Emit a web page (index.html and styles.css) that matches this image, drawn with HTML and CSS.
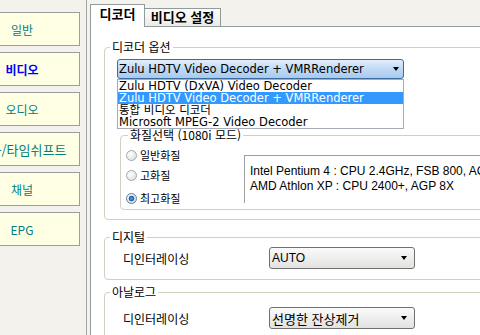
FILE: index.html
```html
<!DOCTYPE html>
<html lang="ko">
<head>
    <meta charset="UTF-8">
    <title>비디오 설정</title>
    <link rel="stylesheet" href="styles.css">
</head>
<body>

    <div class="window">
        <!-- left menu -->
        <div class="sidebar">
            <div class="nav">
                <div class="nav-item">일반</div>
                <div class="nav-item active">비디오</div>
                <div class="nav-item">오디오</div>
                <div class="nav-item wide">녹화/타임쉬프트</div>
                <div class="nav-item">채널</div>
                <div class="nav-item">EPG</div>
            </div>
        </div>

        <div class="tabctl">
            <div class="tabs">
                <div class="tab active">디코더</div>
                <div class="tab">비디오 설정</div>
            </div>

            <div class="pane">
                <fieldset class="group group-decoder">
                    <legend>디코더 옵션</legend>

                    <div class="combo-wrap">
                        <div class="combo combo-blue">
                            <span>Zulu HDTV Video Decoder + VMRRenderer</span>
                            <span class="arrow"></span>
                        </div>
                        <ul class="droplist">
                            <li>Zulu HDTV (DxVA) Video Decoder</li>
                            <li class="selected">Zulu HDTV Video Decoder + VMRRenderer</li>
                            <li>통합 비디오 디코더</li>
                            <li>Microsoft MPEG-2 Video Decoder</li>
                        </ul>
                    </div>

                    <fieldset class="group group-quality">
                        <legend>화질선택 (1080i 모드)</legend>
                        <div class="quality-body">
                            <div class="radios">
                                <div class="radio-row"><span class="radio"></span>일반화질</div>
                                <div class="radio-row"><span class="radio"></span>고화질</div>
                                <div class="radio-row"><span class="radio checked"></span>최고화질</div>
                            </div>
                            <div class="info-box">
                                Intel Pentium 4 : CPU 2.4GHz, FSB 800, AGP 4X<br>
                                AMD Athlon XP : CPU 2400+, AGP 8X
                            </div>
                        </div>
                    </fieldset>
                </fieldset>

                <fieldset class="group group-digital">
                    <legend>디지털</legend>
                    <div class="row">
                        <div class="row-label">디인터레이싱</div>
                        <div class="combo combo-gray">
                            <span class="latin">AUTO</span>
                            <span class="arrow"></span>
                        </div>
                    </div>
                </fieldset>

                <fieldset class="group group-analog">
                    <legend>아날로그</legend>
                    <div class="row">
                        <div class="row-label">디인터레이싱</div>
                        <div class="combo combo-gray">
                            <span class="ko">선명한 잔상제거</span>
                            <span class="arrow"></span>
                        </div>
                    </div>
                </fieldset>
            </div>
        </div>
    </div>

</body>
</html>
```

FILE: styles.css
```css
body {
    margin: 0;
    background: #f3f2ec;
    font-family: "DejaVu Sans", "Noto Sans CJK KR", sans-serif;
    font-size: 12px;
    color: #000;
    overflow: hidden;
}
.window {
    display: flex;
    width: 560px;
    height: 335px;
}

/* left menu */
.sidebar {
    width: 86px;
    border-right: 1px solid #a7a7a2;
    padding-top: 12px;
    overflow: hidden;
}
.nav {
    margin-left: -36px;
    width: 116px;
    display: flex;
    flex-direction: column;
    gap: 6px;
}
.nav-item {
    height: 34px;
    box-sizing: border-box;
    border: 1px solid #9d9d9d;
    background: #ffffe4;
    color: #008080;
    display: flex;
    align-items: center;
    justify-content: center;
    font-family: "Noto Sans CJK KR", sans-serif;
    font-size: 12px;
    white-space: nowrap;
}
.nav-item.wide {
    font-size: 13px;
}
.nav-item.active {
    color: #0000ff;
    font-weight: bold;
}

/* tab control */
.tabctl {
    margin-left: 3px;
    width: 450px;
    display: flex;
    flex-direction: column;
}
.tabs {
    flex-shrink: 0;
    display: flex;
    align-items: flex-end;
    height: 27px;
    margin-bottom: -1px;
}
.tab {
    box-sizing: border-box;
    border: 1px solid #919b9c;
    border-bottom: none;
    font-family: "Noto Sans CJK KR", sans-serif;
    font-weight: bold;
    font-size: 13px;
    line-height: 16px;
    text-align: center;
    white-space: nowrap;
    width: 77px;
    height: 18px;
    margin-left: -1px;
    margin-bottom: 1px;
    background: linear-gradient(#fcfcfb, #ecebe6);
}
.tab.active {
    width: 55px;
    height: 23px;
    margin-left: 0;
    margin-bottom: 0;
    padding-top: 1px;
    background: #fff;
    position: relative;
    z-index: 1;
}
.pane {
    flex: 1;
    min-height: 0;
    overflow: hidden;
    background: #fff;
    border-top: 1px solid #919b9c;
    border-left: 1px solid #919b9c;
    padding: 13px 13px 0;
}

/* group boxes */
.group {
    margin: 0;
    padding: 0;
    min-width: 0;
    border: 1px solid #d0d0bf;
    border-radius: 4px;
}
.group legend {
    padding: 0 2px;
    margin-left: 5px;
    font-family: "Noto Sans CJK KR", sans-serif;
    font-size: 12px;
    line-height: 14px;
}

/* combo boxes */
.combo {
    box-sizing: border-box;
    display: flex;
    align-items: center;
    border-radius: 3px;
    white-space: nowrap;
}
.arrow {
    margin-left: auto;
    width: 0;
    height: 0;
    border-left: 3.5px solid transparent;
    border-right: 3.5px solid transparent;
    border-top: 4px solid #000;
}
.combo-wrap {
    position: relative;
    margin: 5px 0 0 12px;
    width: 287px;
}
.combo-blue {
    height: 20px;
    padding: 0 4px 0 1px;
    border: 1px solid #3c6b9d;
    background: linear-gradient(#e2effc, #c2dbf5 45%, #a8caef);
    font-size: 11.5px;
}
.droplist {
    position: absolute;
    top: 100%;
    left: 0;
    width: 100%;
    box-sizing: border-box;
    margin: 0;
    padding: 0;
    list-style: none;
    background: #fff;
    border: 1px solid #a5acb5;
    z-index: 2;
    font-size: 11.5px;
}
.droplist li {
    height: 12px;
    line-height: 12px;
    padding-left: 1px;
    white-space: nowrap;
}
.droplist li.selected {
    background: #3399ff;
    color: #fff;
}
.combo-gray {
    width: 146px;
    height: 22px;
    padding: 0 7px 0 2px;
    border: 1px solid #707070;
    background: linear-gradient(#fafafa, #e2e2e0);
}
.latin {
    font-family: "Liberation Sans", Arial, sans-serif;
    font-size: 12px;
}
.ko {
    font-family: "Noto Sans CJK KR", sans-serif;
    font-size: 13px;
}

/* quality */
.group-quality {
    margin: 49px 0 9px 15px;
    padding-bottom: 1px;
}
.group-quality legend {
    margin-left: 7px;
}
.quality-body {
    display: flex;
}
.radios {
    width: 123px;
    box-sizing: border-box;
    padding: 3px 0 0 5px;
}
.radio-row {
    height: 20px;
    display: flex;
    align-items: center;
    gap: 3px;
    font-family: "Noto Sans CJK KR", sans-serif;
    font-size: 11px;
}
.radio-row:last-child {
    margin-top: 3px;
}
.radio {
    width: 11px;
    height: 11px;
    box-sizing: border-box;
    border-radius: 50%;
    border: 1px solid #a3a7ab;
    background: radial-gradient(circle at 35% 35%, #ffffff, #d9d9d5);
}
.radio.checked {
    border-color: #5f7f9f;
    background: radial-gradient(circle, #4aa8ec 0, #1d60a6 2.5px, transparent 3.2px),
                radial-gradient(circle at 35% 35%, #ffffff, #d2d2ce);
}
.info-box {
    flex: 1;
    margin-top: 13px;
    height: 48px;
    box-sizing: border-box;
    border-top: 1px solid #a0a0a0;
    border-left: 1px solid #a0a0a0;
    padding: 8px 0 0 5px;
    font-family: "Liberation Sans", Arial, sans-serif;
    font-size: 12px;
    line-height: 15px;
    white-space: nowrap;
}

/* deinterlace rows */
.row {
    display: flex;
    align-items: center;
    padding-left: 18px;
}
.row-label {
    width: 146px;
    font-family: "Noto Sans CJK KR", sans-serif;
    font-size: 12px;
}
.group-digital {
    margin-top: 10px;
}
.group-digital .row {
    margin: 3px 0 10px;
}
.group-analog {
    margin-top: 5px;
}
.group-analog .row {
    margin: 8px 0 10px;
}
```
